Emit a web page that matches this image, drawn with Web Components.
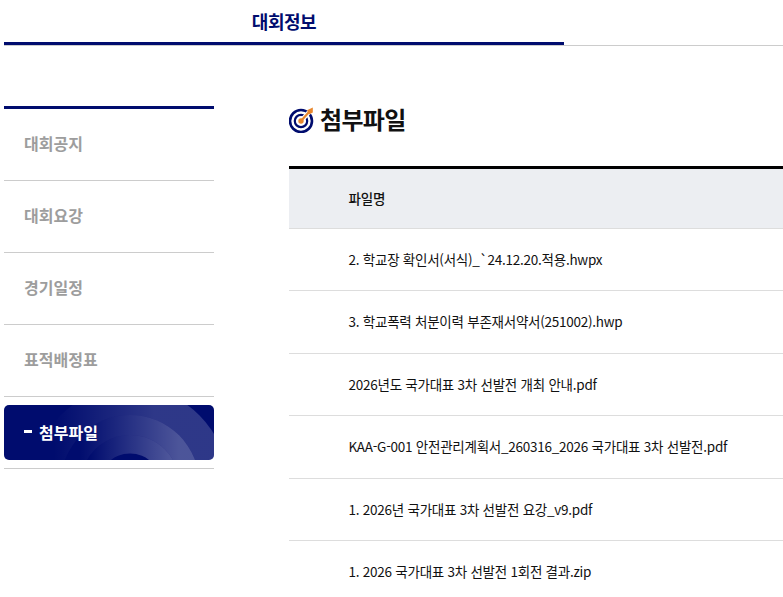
<!DOCTYPE html>
<html lang="ko">
<head>
<meta charset="utf-8">
<title>첨부파일</title>
<style>
  html, body { margin: 0; padding: 0; background: #fff; overflow: hidden; height: 597px; }
  body { font-family: "Noto Sans CJK KR", "Noto Sans", sans-serif; color: #111; }
</style>
</head>
<body>
<page-shell>
  <tab-bar slot="tabs" label="대회정보"></tab-bar>
  <side-menu slot="side">
    <menu-item>대회공지</menu-item>
    <menu-item>대회요강</menu-item>
    <menu-item>경기일정</menu-item>
    <menu-item>표적배정표</menu-item>
    <menu-item active>첨부파일</menu-item>
  </side-menu>
  <section-title slot="main">첨부파일</section-title>
  <file-table slot="main" heading="파일명">
    <file-row>2. 학교장 확인서(서식)_`24.12.20.적용.hwpx</file-row>
    <file-row>3. 학교폭력 처분이력 부존재서약서(251002).hwp</file-row>
    <file-row>2026년도 국가대표 3차 선발전 개최 안내.pdf</file-row>
    <file-row>KAA-G-001 안전관리계획서_260316_2026 국가대표 3차 선발전.pdf</file-row>
    <file-row>1. 2026년 국가대표 3차 선발전 요강_v9.pdf</file-row>
    <file-row>1. 2026 국가대표 3차 선발전 1회전 결과.zip</file-row>
  </file-table>
</page-shell>
<script>
function shadow(el, html) {
  el.attachShadow({ mode: "open" }).innerHTML = html;
}

customElements.define("page-shell", class extends HTMLElement {
  constructor() {
    super();
    shadow(this, `
      <style>
        :host { display: block; padding-left: 4px; }
        .cols { display: flex; gap: 75px; padding-top: 60px; }
        .side { flex: 0 0 210px; }
        .main { flex: 1 0 494px; min-width: 0; }
      </style>
      <slot name="tabs"></slot>
      <div class="cols">
        <div class="side"><slot name="side"></slot></div>
        <div class="main"><slot name="main"></slot></div>
      </div>`);
  }
});

customElements.define("tab-bar", class extends HTMLElement {
  constructor() {
    super();
    shadow(this, `
      <style>
        :host { display: block; border-bottom: 1px solid #ccc; }
        div {
          width: 560px; height: 42px;
          border-bottom: 3px solid #000c6e;
          display: flex; align-items: center; justify-content: center;
          font-size: 18px; font-weight: 700; color: #000c6e; letter-spacing: -0.45px;
          line-height: 40px;
        }
      </style>
      <div>${this.getAttribute("label")}</div>`);
  }
});

customElements.define("side-menu", class extends HTMLElement {
  constructor() {
    super();
    shadow(this, `
      <style>
        :host { display: block; border-top: 3px solid #000c6e; }
      </style>
      <slot></slot>`);
  }
});

customElements.define("menu-item", class extends HTMLElement {
  constructor() {
    super();
    const on = this.hasAttribute("active");
    shadow(this, `
      <style>
        :host { display: block; height: 71px; border-bottom: 1px solid #ccc; }
        .plain {
          height: 67px; display: flex; align-items: center; padding-left: 20px;
          font-size: 16px; font-weight: 700; color: #9d9d9d;
        }
        .wrap { padding-top: 8px; }
        .on {
          height: 55px; border-radius: 5px; background: #000c6e;
          display: flex; align-items: center; padding-left: 20px; gap: 7px;
          position: relative; overflow: hidden;
          font-size: 16px; font-weight: 700; color: #fff;
        }
        .on svg { position: absolute; left: 0; top: 0; }
        .on span { position: relative; top: -1px; }
        .on .dash { width: 8px; height: 3px; background: #fff; position: relative; top: -1px; }
      </style>
      ${on ? `<div class="wrap"><div class="on">
        <svg width="210" height="55" viewBox="0 0 210 55" aria-hidden="true">
          <defs>
            <linearGradient id="g1" x1="50" y1="0" x2="150" y2="0" gradientUnits="userSpaceOnUse">
              <stop offset="0" stop-color="#fff" stop-opacity="0"/>
              <stop offset="1" stop-color="#fff" stop-opacity=".18"/>
            </linearGradient>
            <linearGradient id="g2" x1="75" y1="0" x2="175" y2="0" gradientUnits="userSpaceOnUse">
              <stop offset="0" stop-color="#fff" stop-opacity="0"/>
              <stop offset="1" stop-color="#fff" stop-opacity=".3"/>
            </linearGradient>
            <linearGradient id="g3" x1="85" y1="0" x2="165" y2="0" gradientUnits="userSpaceOnUse">
              <stop offset="0" stop-color="#fff" stop-opacity="0"/>
              <stop offset="1" stop-color="#fff" stop-opacity=".3"/>
            </linearGradient>
          </defs>
          <circle cx="126" cy="79.5" r="98" fill="url(#g1)"/>
          <circle cx="126" cy="79.5" r="69.5" fill="#000c6e"/>
          <circle cx="126" cy="79.5" r="69.5" fill="url(#g2)"/>
          <circle cx="126" cy="79.5" r="49.5" fill="#000c6e"/>
          <circle cx="126" cy="79.5" r="49.5" fill="url(#g3)"/>
          <circle cx="126" cy="79.5" r="31" fill="#000c6e"/>
        </svg>
        <i class="dash"></i><span><slot></slot></span>
      </div></div>` : `<div class="plain"><slot></slot></div>`}`);
  }
});

customElements.define("section-title", class extends HTMLElement {
  constructor() {
    super();
    shadow(this, `
      <style>
        :host {
          display: flex; align-items: center; gap: 6px; height: 28px; margin-bottom: 32px;
          font-size: 24px; font-weight: 700; color: #111; letter-spacing: -0.7px;
        }
        svg { flex: none; }
        span { padding-bottom: 3px; }
      </style>
      <svg width="25" height="26" viewBox="0 0 25 26" aria-hidden="true">
        <circle cx="12" cy="14" r="11" fill="none" stroke="#000c6e" stroke-width="2.6"/>
        <circle cx="12" cy="14" r="6.2" fill="none" stroke="#000c6e" stroke-width="2.2"/>
        <path d="M12 14 L22 3" stroke="#fff" stroke-width="4.6" fill="none"/>
        <circle cx="12" cy="14" r="2.7" fill="#e8872e"/>
        <path d="M12 14 L20 5" stroke="#e8872e" stroke-width="2.2" fill="none"/>
        <path d="M18 3.2 L23.8 0.6 L23.8 5.4 L20 7.6 Z" fill="#e8872e"/>
      </svg>
      <span><slot></slot></span>`);
  }
});

customElements.define("file-table", class extends HTMLElement {
  constructor() {
    super();
    shadow(this, `
      <style>
        :host { display: block; border-top: 3px solid #000; }
        .head {
          height: 59px; display: flex; align-items: center; padding-left: 59.5px;
          margin-bottom: -0.5px;
          background: #eceef2; border-bottom: 1px solid #ddd;
          font-size: 13.5px; font-weight: 500; color: #111; letter-spacing: -0.2px;
        }
        .head span { position: relative; top: -1px; }
      </style>
      <div class="head"><span>${this.getAttribute("heading")}</span></div>
      <slot></slot>`);
  }
});

customElements.define("file-row", class extends HTMLElement {
  constructor() {
    super();
    shadow(this, `
      <style>
        :host {
          display: flex; align-items: center; height: 62.5px; box-sizing: border-box;
          padding-left: 59.5px; padding-bottom: 1px; border-bottom: 1px solid #ddd;
          font-size: 13.5px; color: #111; letter-spacing: -0.25px; white-space: nowrap;
        }
      </style>
      <slot></slot>`);
  }
});
</script>
</body>
</html>
